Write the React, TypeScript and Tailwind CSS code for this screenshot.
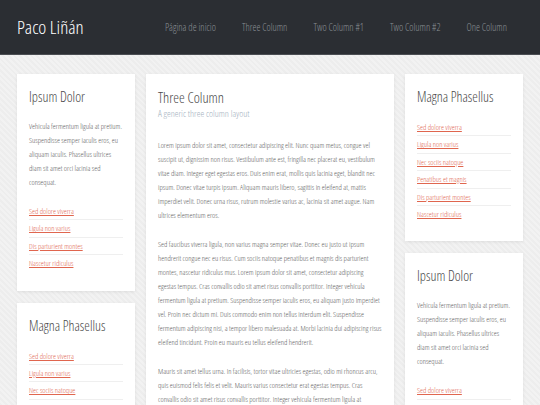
const font = { fontFamily: "'Open Sans', 'Roboto Condensed', sans-serif" } as const;

const LINKS_SHORT = ["Sed dolore viverra", "Ligula non varius", "Dis parturient montes", "Nascetur ridiculus"];
const LINKS_LONG = [
  "Sed dolore viverra", "Ligula non varius", "Nec sociis natoque",
  "Penatibus et magnis", "Dis parturient montes", "Nascetur ridiculus",
];
const NAV = ["Página de inicio", "Three Column", "Two Column #1", "Two Column #2", "One Column"];

const BLURB =
  "Vehicula fermentum ligula at pretium. Suspendisse semper iaculis eros, eu aliquam iaculis. Phasellus ultrices diam sit amet orci lacinia sed consequat.";

const PARAS = [
  "Lorem ipsum dolor sit amet, consectetur adipiscing elit. Nunc quam metus, congue vel suscipit ut, dignissim non risus. Vestibulum ante est, fringilla nec placerat eu, vestibulum vitae diam. Integer eget egestas eros. Duis enim erat, mollis quis lacinia eget, blandit nec ipsum. Donec vitae turpis ipsum. Aliquam mauris libero, sagittis in eleifend at, mattis imperdiet velit. Donec urna risus, rutrum molestie varius ac, lacinia sit amet augue. Nam ultrices elementum eros.",
  "Sed faucibus viverra ligula, non varius magna semper vitae. Donec eu justo ut ipsum hendrerit congue nec eu risus. Cum sociis natoque penatibus et magnis dis parturient montes, nascetur ridiculus mus. Lorem ipsum dolor sit amet, consectetur adipiscing egestas tempus. Cras convallis odio sit amet risus convallis porttitor. Integer vehicula fermentum ligula at pretium. Suspendisse semper iaculis eros, eu aliquam justo imperdiet vel. Proin nec dictum mi. Duis commodo enim non tellus interdum elit. Suspendisse fermentum adipiscing nisi, a tempor libero malesuada at. Morbi lacinia dui adipiscing risus eleifend tincidunt. Proin eu mauris eu tellus eleifend hendrerit.",
  "Mauris sit amet tellus urna. In facilisis, tortor vitae ultricies egestas, odio mi rhoncus arcu, quis euismod felis felis et velit. Mauris varius consectetur erat egestas tempus. Cras convallis odio sit amet risus convallis porttitor. Integer vehicula fermentum ligula at pretium. Suspendisse semper iaculis eros, eu aliquam justo imperdiet vel.",
];

function LinkList({ items }: { items: string[] }) {
  return (
    <ul>
      {items.map((t, i) => (
        <li key={t} className={`leading-[16.4px] text-[7.6px] ${i > 0 ? "border-t border-[#efefef]" : ""}`}>
          <a href="#" className="text-[#e0664f] underline">{t}</a>
        </li>
      ))}
    </ul>
  );
}

function Card({ title, text, links }: { title: string; text?: string; links: string[] }) {
  return (
    <div className="bg-white px-3 pt-[14px] pb-[19px] shadow-[0_1px_3px_rgba(0,0,0,0.08)]">
      <h2 className="text-[14px] leading-[18px] text-[#4a4a4a] mb-[13px]">{title}</h2>
      {text && (
        <p className="text-[7.6px] leading-[14px] text-[#5e5e5e] mb-[14px]">{text}</p>
      )}
      <LinkList items={links} />
    </div>
  );
}

export default function App() {
  return (
    <div
      className="min-h-screen bg-[#efefef] bg-[repeating-linear-gradient(45deg,#f2f2f2_0px,#f2f2f2_2px,#ededed_2px,#ededed_4px)] font-light font-stretch-condensed"
      style={font}
    >
      {/* Header */}
      <header className="h-[55px] bg-[#2b2e33] border-b border-[#4b4e53] flex items-center justify-between pl-[17px] pr-[33px]">
        <a href="#" className="text-white text-[19px]">Paco Liñán</a>
        <nav className="flex gap-[26px] text-[10px] text-[#8a8e93]">
          {NAV.map((n) => (
            <a key={n} href="#">{n}</a>
          ))}
        </nav>
      </header>

      {/* Columns */}
      <div className="flex items-start gap-[11px] px-[17px] pt-[19px]">
        <div className="w-[118px] shrink-0 flex flex-col gap-[12px]">
          <Card title="Ipsum Dolor" text={BLURB} links={LINKS_SHORT} />
          <Card title="Magna Phasellus" links={LINKS_LONG} />
        </div>

        <div className="flex-1 bg-white px-3 pt-[15px] pb-6 shadow-[0_1px_3px_rgba(0,0,0,0.08)]">
          <h1 className="text-[14.5px] leading-[18px] text-[#4a4a4a]">Three Column</h1>
          <p className="text-[9.5px] leading-[14px] text-[#a3b0be] mb-[17px]">A generic three column layout</p>
          {PARAS.map((p, i) => (
            <p key={i} className="text-[7.6px] leading-[14px] text-[#5e5e5e] mb-[15px]">{p}</p>
          ))}
        </div>

        <div className="w-[118px] shrink-0 flex flex-col gap-[12px]">
          <Card title="Magna Phasellus" links={LINKS_LONG} />
          <Card title="Ipsum Dolor" text={BLURB} links={LINKS_SHORT} />
        </div>
      </div>
    </div>
  );
}
